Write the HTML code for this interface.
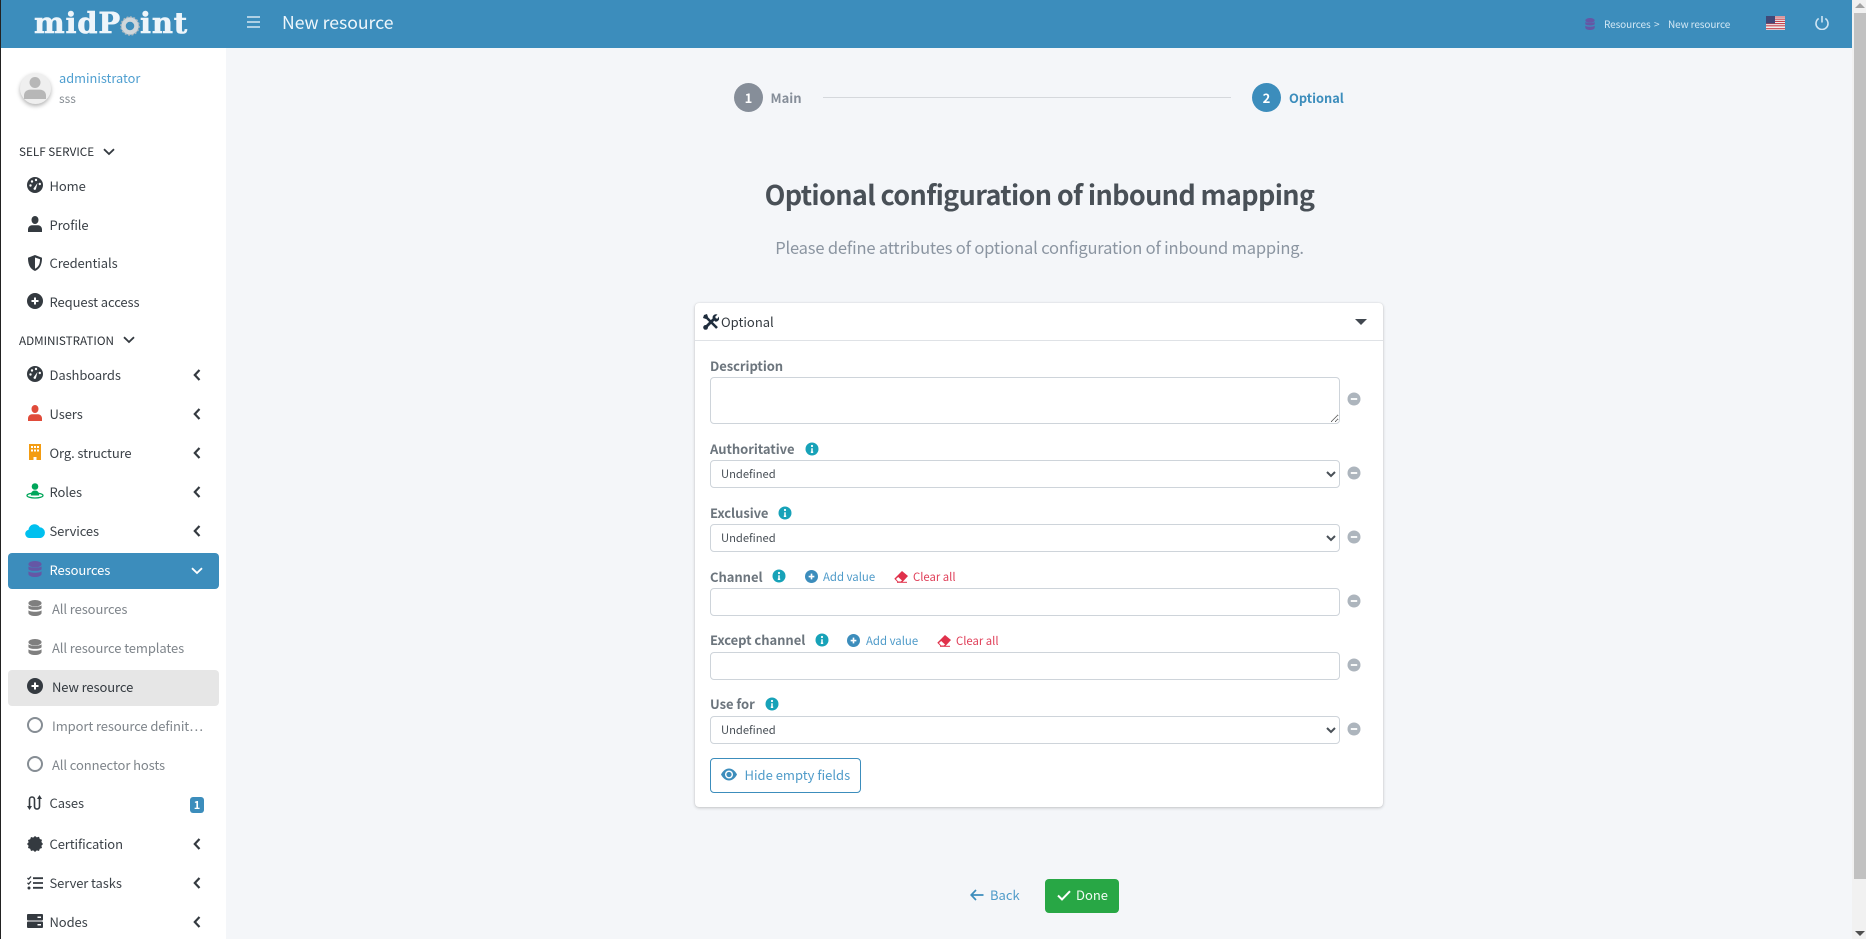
<!DOCTYPE html>
<html lang="en"><head><meta charset="utf-8"><title>New resource</title>
<style>
*{box-sizing:border-box}
html,body{margin:0;padding:0;width:1866px;height:939px;overflow:hidden;background:#f4f6f9;font-family:"Noto Sans CJK JP","Liberation Sans",sans-serif;font-size:14px;color:#343a40}
.a,.t,svg.i{position:absolute}
.t{line-height:20px;white-space:nowrap}
.n{font-size:13px;letter-spacing:-.1px;color:#3c4248;left:49.500px}
.s{font-size:13px;letter-spacing:-.1px;color:#7f858b;left:52px}
.h{font-size:11.700px;color:#2b3036;left:19px}
.l{font-size:13px;letter-spacing:-.05px;font-weight:700;color:#6c757d;left:710px}
.add{font-size:11.400px;color:#4f9bc9}
.clr{font-size:11.300px;color:#e0405a}
select,textarea,input{position:absolute;left:710px;width:630px;border:1px solid #ced4da;border-radius:4px;background:#fff;font-family:inherit;font-size:11.200px;color:#495057;margin:0}
select{height:28px;padding:0 6px}
input{height:28px}
</style></head><body>
<svg width="0" height="0" style="position:absolute"><defs>
<symbol id="db" viewBox="0 0 16 16" preserveAspectRatio="none"><ellipse cx="8" cy="3.200" rx="7.500" ry="3.200" fill="currentColor"/><path d="M.5 5.200c1.500 2 13.500 2 15 0v3c-1.500 2.300-13.500 2.300-15 0zM.5 10.200c1.500 2 13.500 2 15 0v3c-1.500 3.800-13.500 3.800-15 0z" fill="currentColor"/></symbol>
<symbol id="plus" viewBox="0 0 16 16"><circle cx="8" cy="8" r="8" fill="currentColor"/><path d="M8 4.500v7M4.500 8h7" stroke="#fff" stroke-width="2"/></symbol>
<symbol id="minus" viewBox="0 0 16 16"><circle cx="8" cy="8" r="6.500" fill="#adb5bd"/><path d="M4.800 8h6.400" stroke="#fff" stroke-width="1.800"/></symbol>
<symbol id="info" viewBox="0 0 16 16"><circle cx="8" cy="8" r="6.500" fill="#17a2b8"/><path d="M8 7.200v4M6.800 11.300h2.400" stroke="#fff" stroke-width="1.500"/><circle cx="8" cy="5" r="1.100" fill="#fff"/></symbol>
<symbol id="gauge" viewBox="0 0 16 16"><circle cx="8" cy="8" r="8" fill="currentColor"/><g fill="#fff"><circle cx="3.500" cy="8.500" r="1.200"/><circle cx="5" cy="4.500" r="1.200"/><circle cx="9" cy="3" r="1.200"/><circle cx="12.800" cy="7" r="1.200"/><path d="M6.500 11.500 10.500 6l-1.600 6.300a1.300 1.300 0 0 1-2.400-.8z"/></g></symbol>
<symbol id="user" viewBox="0 0 16 16" preserveAspectRatio="none"><circle cx="8" cy="4" r="4" fill="currentColor"/><path d="M0 16v-2.500C0 11 2 9.200 4.500 9.200h7c2.500 0 4.500 1.800 4.500 4.300V16z" fill="currentColor"/></symbol>
<symbol id="shield" viewBox="0 0 16 16"><path d="M8 0 1 2.700c0 6 1.500 10.800 7 13.300 5.500-2.500 7-7.300 7-13.300z" fill="currentColor"/><path d="M8 2.500 13 4.300c0 4-1 7.500-5 9.500z" fill="#fff"/></symbol>
<symbol id="org" viewBox="0 0 16 16"><path d="M2 0h12v16H9.500v-3h-3v3H2z" fill="currentColor"/><path d="M4 2h2v2H4zM7 2h2v2H7zM10 2h2v2h-2zM4 5.500h2v2H4zM7 5.500h2v2H7zM10 5.500h2v2h-2z" fill="#fff"/></symbol>
<symbol id="role" viewBox="0 0 18 16"><circle cx="9" cy="3.500" r="3.300" fill="currentColor"/><path d="M4.800 12.500c0-3.500 1.800-5 4.200-5s4.200 1.500 4.200 5z" fill="currentColor"/><ellipse cx="9" cy="12.500" rx="8" ry="2.500" fill="none" stroke="currentColor" stroke-width="1.300"/></symbol>
<symbol id="cloud" viewBox="0 0 20 15"><path d="M4.500 15a4.200 4.200 0 0 1-1-8.300A6 6 0 0 1 14.700 4.300 5.400 5.400 0 0 1 15.500 15z" fill="currentColor"/></symbol>
<symbol id="cases" viewBox="0 0 16 16"><path d="M2.500 13V4.500a2.500 2.500 0 0 1 5 0v7a2.500 2.500 0 0 0 5 0V3" fill="none" stroke="currentColor" stroke-width="1.600"/><path d="M0 11h5l-2.500 4zM10 4l2.500-4L15 4z" fill="currentColor"/></symbol>
<symbol id="cert" viewBox="0 0 16 16"><path d="m8 0 1.800 1.400 2.200-.6.800 2.200 2.200.8-.6 2.200L16 8l-1.600 1.800.6 2.200-2.200.8-.8 2.200-2.200-.6L8 16l-1.800-1.600-2.200.6-.8-2.200-2.200-.8.6-2.200L0 8l1.600-1.800L1 4l2.200-.8L4 1l2.200.6z" fill="currentColor"/></symbol>
<symbol id="tasks" viewBox="0 0 16 14"><path d="M6 2.200h10M6 7h10M6 11.800h10" stroke="currentColor" stroke-width="1.800"/><path d="m.5 2 1.200 1.200L4 .5M.5 6.800 1.700 8 4 5.300" fill="none" stroke="currentColor" stroke-width="1.300"/><circle cx="2" cy="12" r="1.500" fill="currentColor"/></symbol>
<symbol id="server" viewBox="0 0 16 14"><path d="M1 0h14a1 1 0 0 1 1 1v4.500a1 1 0 0 1-1 1H1a1 1 0 0 1-1-1V1a1 1 0 0 1 1-1zM1 7.500h14a1 1 0 0 1 1 1V13a1 1 0 0 1-1 1H1a1 1 0 0 1-1-1V8.500a1 1 0 0 1 1-1z" fill="currentColor"/><path d="M10.500 2.500h3.500v1.500h-3.500zM10.500 10h3.500v1.500h-3.500z" fill="#fff"/></symbol>
<symbol id="left" viewBox="0 0 8 12"><path d="M6.500 1 1.800 6l4.700 5" fill="none" stroke="currentColor" stroke-width="2.200"/></symbol>
<symbol id="down" viewBox="0 0 12 8"><path d="M1 1.200 6 6l5-4.800" fill="none" stroke="currentColor" stroke-width="1.800"/></symbol>
<symbol id="eraser" viewBox="0 0 14 12"><path d="M8 0 14 5 8.500 11H3.500L.3 7.800z" fill="currentColor"/><path d="M4.200 6 8 9.500 6.800 10.500H4.200L2 8z" fill="#fff"/><path d="M3 11.300h10" stroke="currentColor" stroke-width="1"/></symbol>
</defs></svg>

<div class="a" style="left:0;top:0;width:1px;height:939px;background:#222;z-index:5"></div>
<div class="a" style="left:1px;top:48px;width:225px;height:891px;background:#fff"></div>
<div class="a" style="left:0;top:0;width:1852px;height:48px;background:#3c8dbc"></div>

<!-- Scrollbar -->
<div class="a" style="left:1852px;top:0;width:14px;height:939px;background:#f1f1f1"></div>
<div class="a" style="left:1854px;top:13px;width:12px;height:866px;background:#c1c1c1"></div>
<div class="a" style="left:1855px;top:3px;width:0;height:0;border:5px solid transparent;border-top:0;border-bottom:5px solid #a3a3a3"></div>
<div class="a" style="left:1855px;top:931px;width:0;height:0;border:5px solid transparent;border-bottom:0;border-top:5px solid #505050"></div>

<!-- Header -->
<div class="t" style="left:34px;top:7px;line-height:32px;font-family:'DejaVu Serif','Liberation Serif',serif;font-weight:700;font-size:29px;color:#eef5fa;letter-spacing:.8px;-webkit-text-stroke:.6px #eef5fa">mid<span>P</span><span style="display:inline-block;width:19px"></span>int</div>
<svg class="i" style="left:120px;top:16px" width="20" height="20" viewBox="0 0 20 20"><circle cx="10" cy="10" r="6.500" fill="none" stroke="#cfd6da" stroke-width="4.500"/><circle cx="10" cy="10" r="9" fill="none" stroke="#aeb9c0" stroke-width="1.500" stroke-dasharray="2 1.500"/></svg>
<svg class="i" style="left:247px;top:16px" width="14" height="12" viewBox="0 0 14 12"><path d="M0 1h13M0 6h13M0 11h13" stroke="#d5e6f1" stroke-width="1.500"/></svg>
<div class="t" style="left:282px;top:13px;font-size:17.600px;color:#eef6fb">New resource</div>
<svg class="i" style="left:1585px;top:18px;color:#6557a5" width="10" height="12"><use href="#db"/></svg>
<div class="t" style="left:1604px;top:14px;font-size:10px;letter-spacing:-.1px;color:#d3e8f5">Resources</div>
<div class="t" style="left:1654px;top:14px;font-size:10px;color:#d3e8f5">&gt;</div>
<div class="t" style="left:1668px;top:14px;font-size:10px;letter-spacing:-.1px;color:#d3e8f5">New resource</div>
<svg class="i" style="left:1766px;top:16px" width="19" height="14" viewBox="0 0 19 14"><rect width="19" height="14" fill="#eee"/><path d="M0 1h19M0 3.200h19M0 5.400h19M0 7.600h19M0 9.800h19M0 12.700h19" stroke="#c8434e" stroke-width="1.100"/><rect width="9" height="7.500" fill="#414877"/></svg>
<svg class="i" style="left:1815px;top:15px" width="14" height="15" viewBox="0 0 14 15"><path d="M7 1v6.500M3.700 3.500a6 6 0 1 0 6.600 0" fill="none" stroke="#cfe5f3" stroke-width="1.600"/></svg>

<!-- User panel -->
<div class="a" style="left:20px;top:73px;width:31px;height:31px;border-radius:50%;background:#efefef;box-shadow:0 2px 4px rgba(0,0,0,.3)"></div>
<svg class="i" style="left:24px;top:77px;color:#b7b7b7" width="22" height="22"><use href="#user"/></svg>
<div class="t" style="left:59px;top:68px;color:#4f9fd0;font-size:12.800px">administrator</div>
<div class="t" style="left:59px;top:89px;color:#878d93;font-size:12px">sss</div>

<!-- Sidebar -->
<div class="t h" style="top:141.500px">SELF SERVICE</div>
<svg class="i" style="left:103px;top:148px;color:#343a40" width="12" height="8"><use href="#down"/></svg>
<svg class="i" style="left:27px;top:177px;color:#343a40" width="16" height="16"><use href="#gauge"/></svg><div class="t n" style="top:176px">Home</div>
<svg class="i" style="left:28px;top:216px;color:#343a40" width="14" height="16"><use href="#user"/></svg><div class="t n" style="top:215px">Profile</div>
<svg class="i" style="left:27px;top:255px;color:#343a40" width="16" height="16"><use href="#shield"/></svg><div class="t n" style="top:253px">Credentials</div>
<svg class="i" style="left:27px;top:293px;color:#343a40" width="16" height="16"><use href="#plus"/></svg><div class="t n" style="top:292px">Request access</div>
<div class="t h" style="top:330.500px">ADMINISTRATION</div>
<svg class="i" style="left:123px;top:336px;color:#343a40" width="12" height="8"><use href="#down"/></svg>

<svg class="i" style="left:27px;top:366px;color:#343a40" width="16" height="16"><use href="#gauge"/></svg><div class="t n" style="top:365px">Dashboards</div>
<svg class="i" style="left:28px;top:405px;color:#e04b3a" width="14" height="16"><use href="#user"/></svg><div class="t n" style="top:404px">Users</div>
<svg class="i" style="left:27px;top:444px;color:#f39c12" width="16" height="16"><use href="#org"/></svg><div class="t n" style="top:443px">Org. structure</div>
<svg class="i" style="left:26px;top:483px;color:#00a65a" width="18" height="16"><use href="#role"/></svg><div class="t n" style="top:482px">Roles</div>
<svg class="i" style="left:25px;top:523px;color:#00c0ef" width="20" height="15"><use href="#cloud"/></svg><div class="t n" style="top:521px">Services</div>

<svg class="i" style="left:193px;top:369px;color:#343a40" width="8" height="12"><use href="#left"/></svg>
<svg class="i" style="left:193px;top:408px;color:#343a40" width="8" height="12"><use href="#left"/></svg>
<svg class="i" style="left:193px;top:447px;color:#343a40" width="8" height="12"><use href="#left"/></svg>
<svg class="i" style="left:193px;top:486px;color:#343a40" width="8" height="12"><use href="#left"/></svg>
<svg class="i" style="left:193px;top:525px;color:#343a40" width="8" height="12"><use href="#left"/></svg>

<div class="a" style="left:8px;top:553px;width:211px;height:36px;background:#3c8dbc;border-radius:4px"></div>
<svg class="i" style="left:28px;top:561px;color:#6557a5" width="14" height="16"><use href="#db"/></svg><div class="t n" style="top:560px;color:#fff">Resources</div>
<svg class="i" style="left:191px;top:567px;color:#fff" width="12" height="8"><use href="#down"/></svg>
<svg class="i" style="left:28px;top:600px;color:#7f7f7f" width="14" height="16"><use href="#db"/></svg><div class="t s" style="top:599px">All resources</div>
<svg class="i" style="left:28px;top:639px;color:#7f7f7f" width="14" height="16"><use href="#db"/></svg><div class="t s" style="top:638px">All resource templates</div>
<div class="a" style="left:8px;top:670px;width:211px;height:36px;background:#e6e6e6;border-radius:4px"></div>
<svg class="i" style="left:27px;top:678px;color:#343a40" width="16" height="16"><use href="#plus"/></svg><div class="t s" style="top:677px;color:#343a40">New resource</div>
<div class="a" style="left:27px;top:717px;width:16px;height:16px;border:2px solid #868d94;border-radius:50%"></div><div class="t s" style="top:716px">Import resource definit…</div>
<div class="a" style="left:27px;top:756px;width:16px;height:16px;border:2px solid #868d94;border-radius:50%"></div><div class="t s" style="top:755px">All connector hosts</div>
<svg class="i" style="left:27px;top:795px;color:#343a40" width="16" height="16"><use href="#cases"/></svg><div class="t n" style="top:793px">Cases</div>
<div class="a" style="left:190px;top:797px;width:14px;height:16px;background:#3c8dbc;border-radius:3px;color:#fff;font-size:11px;font-weight:700;text-align:center;line-height:16px">1</div>
<svg class="i" style="left:27px;top:836px;color:#343a40" width="16" height="16"><use href="#cert"/></svg><div class="t n" style="top:834px">Certification</div>
<svg class="i" style="left:27px;top:876px;color:#343a40" width="16" height="14"><use href="#tasks"/></svg><div class="t n" style="top:873px">Server tasks</div>
<svg class="i" style="left:27px;top:914px;color:#343a40" width="16" height="14"><use href="#server"/></svg><div class="t n" style="top:912px">Nodes</div>
<svg class="i" style="left:193px;top:838px;color:#343a40" width="8" height="12"><use href="#left"/></svg>
<svg class="i" style="left:193px;top:877px;color:#343a40" width="8" height="12"><use href="#left"/></svg>
<svg class="i" style="left:193px;top:916px;color:#343a40" width="8" height="12"><use href="#left"/></svg>

<!-- Stepper -->
<div class="a" style="left:734px;top:83px;width:29px;height:29px;border-radius:50%;background:#868e99;color:#fff;font-weight:700;font-size:13px;text-align:center;line-height:29px">1</div>
<div class="t" style="left:770.500px;top:88px;font-size:13px;font-weight:700;color:#868e99">Main</div>
<div class="a" style="left:823px;top:97px;width:408px;height:1px;background:#d5d8dc"></div>
<div class="a" style="left:1252px;top:83px;width:29px;height:29px;border-radius:50%;background:#3c8dbc;color:#fff;font-weight:700;font-size:13px;text-align:center;line-height:29px">2</div>
<div class="t" style="left:1289px;top:87.500px;font-size:12.800px;font-weight:700;color:#3c8dbc">Optional</div>

<div class="t" style="left:0;width:2079px;text-align:center;top:174px;font-size:27px;line-height:40px;font-weight:700;color:#495057;letter-spacing:-.65px">Optional configuration of inbound mapping</div>
<div class="t" style="left:0;width:2079px;text-align:center;top:235px;font-size:16.500px;line-height:24px;color:#8b95a1;letter-spacing:-.17px">Please define attributes of optional configuration of inbound mapping.</div>

<!-- Card -->
<div class="a" style="left:695px;top:303px;width:688px;height:504px;background:#fff;border-radius:4px;box-shadow:0 0 1px rgba(0,0,0,.13),0 1px 3px rgba(0,0,0,.2)"></div>
<div class="a" style="left:695px;top:340px;width:688px;height:1px;background:#dfe2e6"></div>
<svg class="i" style="left:703px;top:314px" width="16" height="16" viewBox="0 0 16 16"><path d="M2 2 14 14" stroke="#1f2d3d" stroke-width="2.600"/><path d="M1 1 4 0 5 3 3 5 0 4z" fill="#1f2d3d"/><path d="M3 13 11 5" stroke="#1f2d3d" stroke-width="2.800"/><path d="M9.500 3.500a3.600 3.600 0 0 1 5-3l-2.300 2.200.6 1.500 1.500.6L16 2.500a3.600 3.600 0 0 1-4 5z" fill="#1f2d3d"/><circle cx="2.600" cy="13.400" r="2.400" fill="#1f2d3d"/></svg>
<div class="t" style="left:721px;top:312px;font-size:13px;color:#343a40">Optional</div>
<div class="a" style="left:1355px;top:319px;width:0;height:0;border:6px solid transparent;border-bottom:0;border-top:6px solid #414850"></div>

<div class="t l" style="top:356px">Description</div>
<textarea style="top:377px;height:47px;resize:both"></textarea>
<svg class="i" style="left:1346px;top:391px" width="16" height="16"><use href="#minus"/></svg>

<div class="t l" style="top:439px">Authoritative</div>
<svg class="i" style="left:804px;top:441px" width="16" height="16"><use href="#info"/></svg>
<select style="top:460px"><option>Undefined</option></select>
<svg class="i" style="left:1346px;top:465px" width="16" height="16"><use href="#minus"/></svg>

<div class="t l" style="top:503px">Exclusive</div>
<svg class="i" style="left:777px;top:505px" width="16" height="16"><use href="#info"/></svg>
<select style="top:524px"><option>Undefined</option></select>
<svg class="i" style="left:1346px;top:529px" width="16" height="16"><use href="#minus"/></svg>

<div class="t l" style="top:567px">Channel</div>
<svg class="i" style="left:771px;top:568px" width="16" height="16"><use href="#info"/></svg>
<svg class="i" style="left:805px;top:570px;color:#3c8dbc" width="13" height="13"><use href="#plus"/></svg>
<div class="t add" style="left:823px;top:566.500px">Add value</div>
<svg class="i" style="left:894px;top:571px;color:#e0314b" width="14" height="12"><use href="#eraser"/></svg>
<div class="t clr" style="left:913px;top:566.500px">Clear all</div>
<input style="top:588px">
<svg class="i" style="left:1346px;top:593px" width="16" height="16"><use href="#minus"/></svg>

<div class="t l" style="top:630px">Except channel</div>
<svg class="i" style="left:814px;top:632px" width="16" height="16"><use href="#info"/></svg>
<svg class="i" style="left:847px;top:634px;color:#3c8dbc" width="13" height="13"><use href="#plus"/></svg>
<div class="t add" style="left:866px;top:630.500px">Add value</div>
<svg class="i" style="left:937px;top:635px;color:#e0314b" width="14" height="12"><use href="#eraser"/></svg>
<div class="t clr" style="left:956px;top:630.500px">Clear all</div>
<input style="top:652px">
<svg class="i" style="left:1346px;top:657px" width="16" height="16"><use href="#minus"/></svg>

<div class="t l" style="top:694px">Use for</div>
<svg class="i" style="left:764px;top:696px" width="16" height="16"><use href="#info"/></svg>
<select style="top:716px"><option>Undefined</option></select>
<svg class="i" style="left:1346px;top:721px" width="16" height="16"><use href="#minus"/></svg>

<div class="a" style="left:710px;top:758px;width:151px;height:35px;border:1px solid #3c8dbc;border-radius:4px;background:#fff"></div>
<svg class="i" style="left:721px;top:768px" width="16" height="13" viewBox="0 0 16 13"><path d="M0 6.500C2 2.500 5 .5 8 .5s6 2 8 6c-2 4-5 6-8 6s-6-2-8-6z" fill="#3c8dbc"/><circle cx="8" cy="6.500" r="4" fill="#fff"/><circle cx="8" cy="6.500" r="2.600" fill="#3c8dbc"/></svg>
<div class="t" style="left:744.500px;top:765px;font-size:13px;color:#4f9bc9">Hide empty fields</div>

<!-- Footer buttons -->
<svg class="i" style="left:970px;top:889px" width="14" height="12" viewBox="0 0 14 12"><path d="M13.500 6H1.500M6 1 1.200 6 6 11" fill="none" stroke="#3c8dbc" stroke-width="1.700"/></svg>
<div class="t" style="left:990px;top:885px;font-size:13px;color:#4f9bc9">Back</div>
<div class="a" style="left:1045px;top:879px;width:74px;height:34px;background:#28a745;border-radius:4px"></div>
<svg class="i" style="left:1057px;top:890px" width="14" height="11" viewBox="0 0 14 11"><path d="M1 5.500 5 9.500 13 1.200" fill="none" stroke="#fff" stroke-width="2"/></svg>
<div class="t" style="left:1076px;top:885px;font-size:13px;color:#f2fbf4">Done</div>
</body></html>
